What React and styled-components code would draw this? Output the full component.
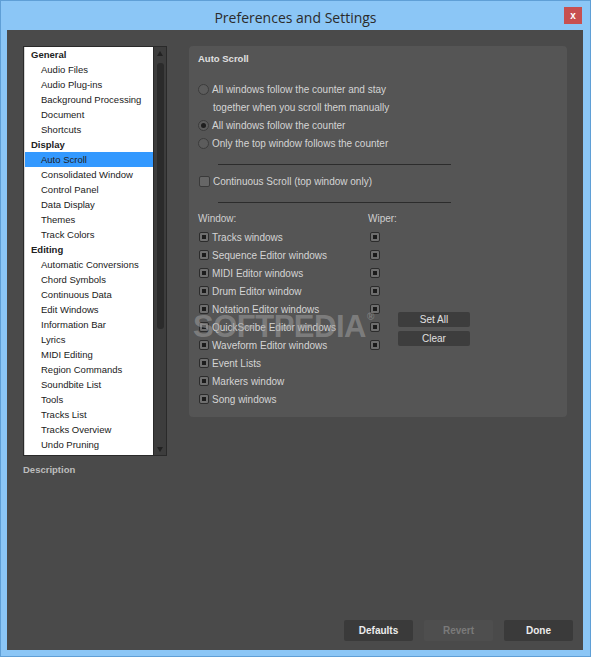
import React from 'react';
import styled, { createGlobalStyle } from 'styled-components';

const sections = [
  { title: 'General', items: ['Audio Files', 'Audio Plug-ins', 'Background Processing', 'Document', 'Shortcuts'] },
  { title: 'Display', items: ['Auto Scroll', 'Consolidated Window', 'Control Panel', 'Data Display', 'Themes', 'Track Colors'] },
  {
    title: 'Editing',
    items: [
      'Automatic Conversions', 'Chord Symbols', 'Continuous Data', 'Edit Windows', 'Information Bar', 'Lyrics',
      'MIDI Editing', 'Region Commands', 'Soundbite List', 'Tools', 'Tracks List', 'Tracks Overview', 'Undo Pruning',
    ],
  },
];

const windows = [
  'Tracks windows', 'Sequence Editor windows', 'MIDI Editor windows', 'Drum Editor window', 'Notation Editor windows',
  'QuickScribe Editor windows', 'Waveform Editor windows', 'Event Lists', 'Markers window', 'Song windows',
];

const App = () => {
  return (
    <>
      <GlobalStyle />
      <Window>
        <TitleBar>
          <Title>Preferences and Settings</Title>
          <CloseButton>x</CloseButton>
        </TitleBar>
        <Content>
          <Main>
            <Sidebar>
              <ListBox>
                <List>
                  {sections.map((s) => (
                    <React.Fragment key={s.title}>
                      <ListHeader>{s.title}</ListHeader>
                      {s.items.map((item) => (
                        <ListItem key={item} $selected={item === 'Auto Scroll'}>{item}</ListItem>
                      ))}
                    </React.Fragment>
                  ))}
                </List>
                <Scrollbar>
                  <Arrow $up />
                  <Thumb />
                  <Arrow />
                </Scrollbar>
              </ListBox>
              <Description>Description</Description>
            </Sidebar>
            <Panel>
              <PanelTitle>Auto Scroll</PanelTitle>
              <RadioGroup>
                <OptionRow>
                  <Radio />
                  <span>All windows follow the counter and stay</span>
                </OptionRow>
                <OptionRow $indent>together when you scroll them manually</OptionRow>
                <OptionRow>
                  <Radio $checked />
                  <span>All windows follow the counter</span>
                </OptionRow>
                <OptionRow>
                  <Radio />
                  <span>Only the top window follows the counter</span>
                </OptionRow>
              </RadioGroup>
              <Separator />
              <OptionRow>
                <EmptyBox />
                <span>Continuous Scroll (top window only)</span>
              </OptionRow>
              <Separator />
              <CheckGrid>
                <Column $width={170}>
                  <ColumnLabel>Window:</ColumnLabel>
                  {windows.map((w) => (
                    <OptionRow key={w}>
                      <FilledBox />
                      <span>{w}</span>
                    </OptionRow>
                  ))}
                </Column>
                <Column $width={30}>
                  <ColumnLabel>Wiper:</ColumnLabel>
                  {windows.slice(0, 7).map((w) => (
                    <OptionRow key={w} $wiper>
                      <FilledBox />
                    </OptionRow>
                  ))}
                </Column>
                <ButtonStack>
                  <SmallButton>Set All</SmallButton>
                  <SmallButton>Clear</SmallButton>
                </ButtonStack>
              </CheckGrid>
            </Panel>
          </Main>
          <Footer>
            <DialogButton>Defaults</DialogButton>
            <DialogButton $disabled>Revert</DialogButton>
            <DialogButton>Done</DialogButton>
          </Footer>
          <Watermark aria-hidden="true">SOFTPEDIA<sup>®</sup></Watermark>
        </Content>
      </Window>
    </>
  );
};

const GlobalStyle = createGlobalStyle`
  html, body {
    margin: 0;
    padding: 0;
    background: #8bc6f6;
  }
  * {
    box-sizing: border-box;
  }
`;

const Window = styled.div`
  width: 591px;
  height: 657px;
  border: 1px solid #5f9fd6;
  background: #8bc6f6;
  display: flex;
  flex-direction: column;
  font-family: "Liberation Sans", Arial, sans-serif;
`;

const TitleBar = styled.div`
  position: relative;
  height: 29px;
  display: flex;
  align-items: center;
  justify-content: center;
`;

const Title = styled.div`
  font-family: "Open Sans", "Noto Sans", sans-serif;
  font-size: 14px;
  color: #2b2b2b;
  margin-top: 3px;
`;

const CloseButton = styled.div`
  position: absolute;
  top: 6px;
  right: 8px;
  width: 18px;
  height: 17px;
  background: #c75050;
  color: #fff;
  font-size: 10px;
  font-weight: bold;
  display: flex;
  align-items: center;
  justify-content: center;
`;

const Content = styled.div`
  position: relative;
  flex: 1;
  margin: 0 7px 6px 6px;
  background: #4a4a4a;
  padding: 16px 10px 9px 16px;
  display: flex;
  flex-direction: column;
`;

const Main = styled.div`
  display: flex;
  align-items: flex-start;
  gap: 22px;
`;

const Sidebar = styled.div`
  width: 144px;
  display: flex;
  flex-direction: column;
`;

const ListBox = styled.div`
  height: 410px;
  border: 1px solid #2a2a2a;
  display: flex;
`;

const List = styled.div`
  flex: 1;
  background: #fff;
  border-left: 1px solid #d6d6d6;
  font-size: 9.5px;
  color: #1a1a1a;
`;

const ListHeader = styled.div`
  height: 15px;
  line-height: 15px;
  padding-left: 6px;
  font-weight: bold;
  color: #222;
`;

const ListItem = styled.div`
  height: 15px;
  line-height: 15px;
  padding-left: 16px;
  background: ${(p) => (p.$selected ? '#3399ff' : 'transparent')};
  color: ${(p) => (p.$selected ? '#222' : '#1a1a1a')};
`;

const Scrollbar = styled.div`
  width: 13px;
  border-left: 1px solid #2a2a2a;
  background: #3d3d3d;
  display: flex;
  flex-direction: column;
  align-items: center;
  padding: 4px 0 3px;
`;

const Arrow = styled.div`
  width: 0;
  height: 0;
  border-left: 3.5px solid transparent;
  border-right: 3.5px solid transparent;
  ${(p) => (p.$up ? 'border-bottom: 5px solid #222;' : 'border-top: 5px solid #222; margin-top: auto;')}
`;

const Thumb = styled.div`
  width: 7px;
  height: 266px;
  margin-top: 7px;
  margin-left: 1px;
  border-radius: 3px;
  background: #2b2b2b;
`;

const Description = styled.div`
  margin-top: 7px;
  line-height: 14px;
  font-size: 9.5px;
  font-weight: bold;
  color: #bdbdbd;
`;

const Panel = styled.div`
  width: 378px;
  height: 371px;
  background: #555;
  border-radius: 4px;
  padding: 5px 9px 9px 9px;
  font-size: 10px;
  color: #d4d4d4;
`;

const PanelTitle = styled.div`
  line-height: 16px;
  font-size: 9.5px;
  font-weight: bold;
  color: #e0e0e0;
`;

const RadioGroup = styled.div`
  margin-top: 13px;
`;

const OptionRow = styled.div`
  height: 18px;
  display: flex;
  align-items: center;
  gap: 3px;
  white-space: nowrap;
  padding-left: ${(p) => (p.$indent ? '15px' : p.$wiper ? '1px' : '0')};
`;

const Radio = styled.div`
  width: 11px;
  height: 11px;
  border-radius: 50%;
  border: 1px solid #3c3c3c;
  background: #5c5c5c;
  display: flex;
  align-items: center;
  justify-content: center;
  &::after {
    content: '';
    width: 5px;
    height: 5px;
    border-radius: 50%;
    background: ${(p) => (p.$checked ? '#1e1e1e' : 'transparent')};
  }
`;

const EmptyBox = styled.div`
  width: 11px;
  height: 11px;
  margin-left: 1px;
  border-radius: 2px;
  border: 1px solid #3a3a3a;
  background: #666;
`;

const FilledBox = styled.div`
  width: 10px;
  height: 10px;
  margin-left: 1px;
  border-radius: 2px;
  border: 1px solid #2c2c2c;
  background: #6e6e6e;
  display: flex;
  align-items: center;
  justify-content: center;
  &::after {
    content: '';
    width: 4px;
    height: 4px;
    background: #1c1c1c;
  }
`;

const Separator = styled.div`
  width: 233px;
  height: 1px;
  margin: 12px 0 7px 20px;
  background: #2c2c2c;
`;

const CheckGrid = styled.div`
  display: flex;
`;

const Column = styled.div`
  width: ${(p) => p.$width}px;
  display: flex;
  flex-direction: column;
`;

const ColumnLabel = styled.div`
  height: 18px;
  line-height: 18px;
  color: #cfcfcf;
`;

const ButtonStack = styled.div`
  display: flex;
  flex-direction: column;
  gap: 4px;
  margin-top: 102px;
`;

const SmallButton = styled.div`
  width: 72px;
  height: 15px;
  line-height: 15px;
  text-align: center;
  border-radius: 2px;
  background: #3d3d3d;
  color: #e0e0e0;
  font-size: 10px;
`;

const Footer = styled.div`
  margin-top: auto;
  display: flex;
  justify-content: flex-end;
  gap: 11px;
`;

const DialogButton = styled.div`
  width: 69px;
  height: 21px;
  line-height: 21px;
  text-align: center;
  border-radius: 2px;
  font-size: 10px;
  font-weight: bold;
  background: ${(p) => (p.$disabled ? '#4e4e4e' : '#3a3a3a')};
  color: ${(p) => (p.$disabled ? '#7a7a7a' : '#ececec')};
`;

const Watermark = styled.div`
  position: absolute;
  left: 186px;
  top: 279px;
  font-family: "Liberation Sans", Arial, sans-serif;
  font-size: 31px;
  font-weight: bold;
  letter-spacing: -0.5px;
  color: rgba(160, 160, 160, 0.55);
  pointer-events: none;
  sup {
    font-size: 10px;
    vertical-align: top;
    position: relative;
    top: 2px;
    margin-left: 1px;
  }
`;

export default App;
